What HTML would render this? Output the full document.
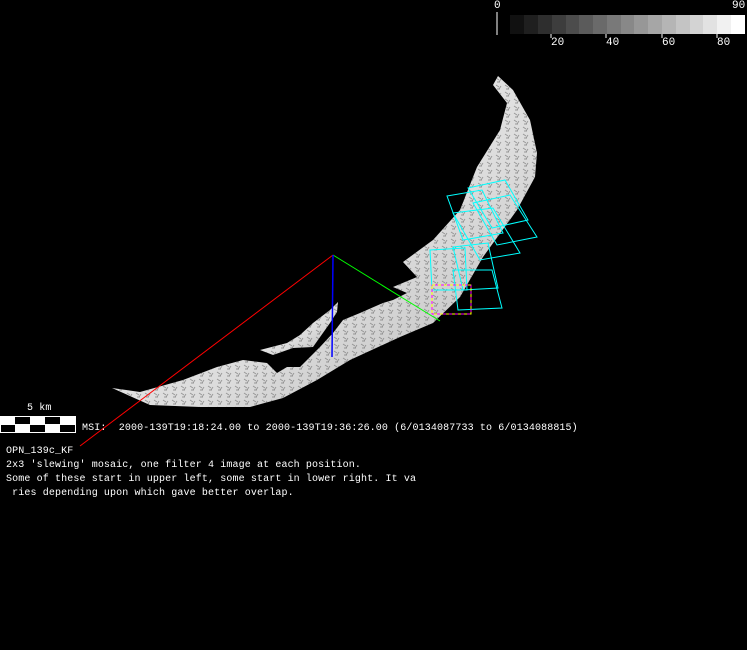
<!DOCTYPE html>
<html><head><meta charset="utf-8"><style>
html,body{margin:0;padding:0;background:#000;}
body{width:747px;height:650px;position:relative;overflow:hidden;font-family:"Liberation Mono",monospace;font-size:10px;color:#fff;}
.t{position:absolute;white-space:pre;line-height:12px;letter-spacing:0.12px;}
.n{font-size:11px;letter-spacing:0;}
</style></head><body>
<svg width="747" height="650" style="position:absolute;left:0;top:0">
<defs>
<linearGradient id="g" x1="0" y1="0" x2="1" y2="1">
<stop offset="0" stop-color="#f4f4f4"/><stop offset="0.6" stop-color="#dcdcdc"/><stop offset="1" stop-color="#b5b5b5"/>
</linearGradient>
<pattern id="p" width="9" height="7" patternUnits="userSpaceOnUse">
<path d="M1 1l3 2M6 2l-2 3M2 5h3" stroke="#777" stroke-width="0.9"/>
</pattern>
</defs>
<g id="shape">
<polygon fill="url(#g)" points="498,76 513,90 530,120 537,153 535,177 517,210 483,257 460,297 433,323 400,337 350,360 317,380 283,398 250,407 200,407 150,405 112,388 140,392 183,380 217,367 243,360 267,363 277,373 287,367 300,367 320,347 333,333 343,320 360,313 383,303 393,300 407,293 393,287 417,277 403,262 433,240 460,210 477,167 500,130 507,103 493,85"/>
<polygon fill="url(#g)" points="260,350 287,343 300,335 313,323 330,310 338,302 337,312 330,323 313,347 293,348 273,355"/>
</g>
<polygon fill="url(#p)" opacity="0.7" points="498,76 513,90 530,120 537,153 535,177 517,210 483,257 460,297 433,323 400,337 350,360 317,380 283,398 250,407 200,407 150,405 112,388 140,392 183,380 217,367 243,360 267,363 277,373 287,367 300,367 320,347 333,333 343,320 360,313 383,303 393,300 407,293 393,287 417,277 403,262 433,240 460,210 477,167 500,130 507,103 493,85"/>
<polygon fill="url(#p)" opacity="0.7" points="260,350 287,343 300,335 313,323 330,310 338,302 337,312 330,323 313,347 293,348 273,355"/>
<line x1="333" y1="255" x2="80" y2="446" stroke="#f00" stroke-width="1"/>
<line x1="333" y1="255" x2="440" y2="321" stroke="#0f0" stroke-width="1"/>
<line x1="333" y1="255" x2="332" y2="357" stroke="#00f" stroke-width="1.5"/>
<g fill="none" stroke="#0ff" stroke-width="1">
<polygon points="447,196 482,190 503,233 463,240"/>
<polygon points="468,188 505,180 528,220 492,228"/>
<polygon points="473,203 510,195 537,237 497,245"/>
<polygon points="453,213 493,208 520,253 480,260"/>
<polygon points="430,250 465,248 467,290 432,290"/>
<polygon points="453,247 488,243 498,288 463,290"/>
<polygon points="453,270 492,270 502,308 458,310"/>
</g>
<rect x="432" y="285" width="39" height="29" fill="none" stroke="#f0f" stroke-width="1"/>
<rect x="432" y="285" width="39" height="29" fill="none" stroke="#ff0" stroke-width="1" stroke-dasharray="3 3"/>
<line x1="497" y1="12" x2="497" y2="35" stroke="#fff"/>
<g>
<rect x="510" y="15" width="14" height="19" fill="#111"/>
<rect x="524" y="15" width="14" height="19" fill="#1f1f1f"/>
<rect x="538" y="15" width="14" height="19" fill="#2e2e2e"/>
<rect x="552" y="15" width="14" height="19" fill="#3d3d3d"/>
<rect x="566" y="15" width="13" height="19" fill="#4c4c4c"/>
<rect x="579" y="15" width="14" height="19" fill="#5b5b5b"/>
<rect x="593" y="15" width="14" height="19" fill="#6a6a6a"/>
<rect x="607" y="15" width="14" height="19" fill="#797979"/>
<rect x="621" y="15" width="13" height="19" fill="#888"/>
<rect x="634" y="15" width="14" height="19" fill="#979797"/>
<rect x="648" y="15" width="14" height="19" fill="#a6a6a6"/>
<rect x="662" y="15" width="14" height="19" fill="#b5b5b5"/>
<rect x="676" y="15" width="14" height="19" fill="#c4c4c4"/>
<rect x="690" y="15" width="13" height="19" fill="#d3d3d3"/>
<rect x="703" y="15" width="14" height="19" fill="#e2e2e2"/>
<rect x="717" y="15" width="14" height="19" fill="#f1f1f1"/>
<rect x="731" y="15" width="14" height="19" fill="#fff"/>
</g>
<g stroke="#fff"><line x1="551" y1="34" x2="551" y2="38"/><line x1="606" y1="34" x2="606" y2="38"/><line x1="662" y1="34" x2="662" y2="38"/><line x1="717" y1="34" x2="717" y2="38"/></g>
<rect x="0" y="416" width="76" height="17" fill="#fff"/>
<g fill="#000">
<rect x="15" y="417" width="15" height="7"/><rect x="45" y="417" width="15" height="7"/>
<rect x="1" y="425" width="14" height="7"/><rect x="30" y="425" width="15" height="7"/><rect x="60" y="425" width="15" height="7"/>
</g>
</svg>
<div class="t n" style="left:494px;top:0">0</div>
<div class="t n" style="left:732px;top:0">90</div>
<div class="t n" style="left:551px;top:37px">20</div>
<div class="t n" style="left:606px;top:37px">40</div>
<div class="t n" style="left:662px;top:37px">60</div>
<div class="t n" style="left:717px;top:37px">80</div>
<div class="t" style="left:27px;top:403px">5 km</div>
<div class="t" style="left:82px;top:423px">MSI:  2000-139T19:18:24.00 to 2000-139T19:36:26.00 (6/0134087733 to 6/0134088815)</div>
<div class="t" style="left:6px;top:446px">OPN_139c_KF</div>
<div class="t" style="left:6px;top:460px">2x3 'slewing' mosaic, one filter 4 image at each position.</div>
<div class="t" style="left:6px;top:474px">Some of these start in upper left, some start in lower right. It va</div>
<div class="t" style="left:6px;top:488px"> ries depending upon which gave better overlap.</div>
</body></html>
